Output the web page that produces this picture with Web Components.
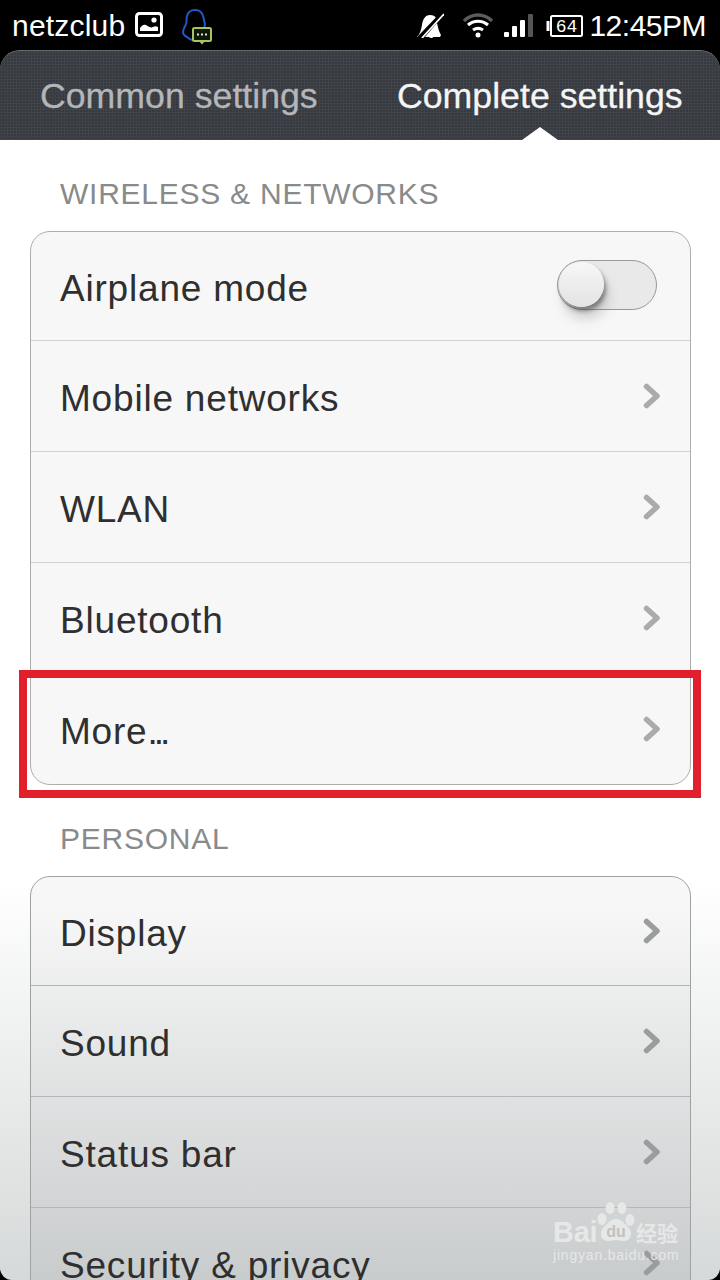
<!DOCTYPE html>
<html>
<head>
<meta charset="utf-8">
<title>Settings</title>
<style>
    html, body { margin: 0; padding: 0; background: #000; }
</style>
</head>
<body>
<settings-app></settings-app>
<script>
class StatusBar extends HTMLElement {
    constructor() {
        super();
        this.attachShadow({mode: "open"}).innerHTML = `
        <style>
            :host {
                display: flex;
                align-items: center;
                height: 50px;
                background: #000;
                color: #fff;
                font: 30px "Liberation Sans", Arial, sans-serif;
                padding: 2px 14px 0 12px;
                box-sizing: border-box;
            }
            .name { margin-right: 10px; letter-spacing: .2px; }
            svg { display: block; flex: none; }
            .photo { margin-top: -4px; }
            .qq { margin-left: 19px; margin-top: 1px; }
            .spacer { flex: 1; }
            .time { margin-left: 6px; letter-spacing: -.5px; }
        </style>
        <span class="name">netzclub</span>
        <svg class="photo" width="28" height="25" viewBox="0 0 28 25"><rect x="1.500" y="1.500" width="25" height="22" rx="3" fill="#000" stroke="#fff" stroke-width="3"/><circle cx="19" cy="8" r="2.600" fill="#fff"/><path d="M5 19v-3c2-3 4-4 6-3 3 2 5 3 7 2 2-1 3-1 5 0v4z" fill="#fff"/></svg>
        <svg class="qq" width="30" height="36" viewBox="0 0 30 36" fill="none"><path d="M22 18c1-1 1-2 1-3-1-3-1-5-2-8-1-4-4-6-8-6S6 3 5 7c-1 3 0 6-1 8-1 3-3 5-3 8 0 2 2 4 4 5 2 2 5 4 8 3" stroke="#2259c4" stroke-width="2"/><rect x="11" y="19" width="18" height="13" rx="1.500" fill="#10160a" stroke="#a4c65c" stroke-width="2"/><path d="M17 32l3 3.500 3-3.500z" fill="#a4c65c"/><path d="M15 25.500h2M19 25.500h2M23 25.500h2" stroke="#e2eec0" stroke-width="2.200"/></svg>
        <span class="spacer"></span>
        <svg style="margin-top:-3px" width="28" height="26" viewBox="0 0 28 26"><path d="M1 25c3-3 4-7 5-12C7 6 10 3 14 3c3 0 5 1 6 3L5 25z" fill="#fff"/><path d="M21 11c1 5 2 9 4 12l-1 2H17c0 1-1 1-2 1s-2-1-2-1H9z" fill="#fff"/><path d="M3 26L27 1" stroke="#000" stroke-width="4"/><path d="M6 26L28 2" stroke="#fff" stroke-width="1.800"/></svg>
        <svg style="margin-left:18px;margin-top:-2px" width="32" height="26" viewBox="0 0 32 26" fill="none"><path d="M2 9c8-8 20-8 28 0" stroke="#5c5c5c" stroke-width="3.500"/><path d="M6 13c6-5 14-5 20 0M11 18c3-2 7-2 10 0" stroke="#fff" stroke-width="3.200"/><circle cx="16" cy="23" r="2.500" fill="#fff"/></svg>
        <svg style="margin-left:10px" width="29" height="24" viewBox="0 0 29 24"><rect x="0" y="18" width="5" height="5" rx="1" fill="#fff"/><rect x="8" y="12" width="5" height="11" rx="1" fill="#fff"/><rect x="16" y="6" width="5" height="17" rx="1" fill="#fff"/><rect x="24" y="0" width="5" height="23" rx="1" fill="#555"/></svg>
        <svg style="margin-left:13px" width="37" height="22" viewBox="0 0 37 22" fill="none"><path d="M2 6v10" stroke="#fff" stroke-width="3"/><rect x="5" y="1" width="31" height="20" rx="1.500" stroke="#fff" stroke-width="2"/><text x="20.500" y="17" text-anchor="middle" font-family="Liberation Mono, monospace" font-size="18" fill="#fff">64</text></svg>
        <span class="time">12:45PM</span>
        `;
    }
}

class TabBar extends HTMLElement {
    constructor() {
        super();
        this.attachShadow({mode: "open"}).innerHTML = `
        <style>
            :host {
                display: flex;
                height: 90px;
                box-sizing: border-box;
                position: relative;
                border-radius: 20px 20px 0 0;
                border-top: 1px solid #6a6d70;
                background-color: #3b3e44;
                background-image: radial-gradient(circle at 1.500px 1.500px, #404349 0, #404349 1px, #36393e 1.400px);
                background-size: 3px 3px;
                font: 35.700px "Liberation Sans", Arial, sans-serif;
                -webkit-text-stroke: .3px currentColor;
            }
            .tab { position: absolute; top: 25px; white-space: nowrap; }
            .off { left: 40px; color: #b4b6b8; }
            .on { left: 397px; color: #f4f5f5; }
            .arrow {
                position: absolute;
                left: 522px;
                bottom: 0;
                width: 0;
                height: 0;
                border-left: 18px solid transparent;
                border-right: 18px solid transparent;
                border-bottom: 13px solid #fff;
            }
        </style>
        <span class="tab off">Common settings</span>
        <span class="tab on">Complete settings</span>
        <span class="arrow"></span>
        `;
    }
}

class ToggleSwitch extends HTMLElement {
    constructor() {
        super();
        this.attachShadow({mode: "open"}).innerHTML = `
        <style>
            :host {
                display: block;
                width: 100px;
                height: 50px;
                margin: 0 4px 2px 0;
                position: relative;
                box-sizing: border-box;
                border-radius: 25px;
                border: 1.500px solid #99979a;
                background: #e9e9e9;
            }
            .knob {
                position: absolute;
                left: 1px;
                top: 1px;
                width: 45px;
                height: 45px;
                border-radius: 50%;
                background: linear-gradient(#f7f7f7, #e3e3e3);
                box-shadow: 2px 4px 4px rgba(60,60,60,.55), 4px 12px 12px rgba(90,90,90,.25);
            }
        </style>
        <div class="knob"></div>
        `;
    }
}

class SettingsRow extends HTMLElement {
    constructor() {
        super();
        this.attachShadow({mode: "open"}).innerHTML = `
        <style>
            :host {
                display: flex;
                align-items: center;
                justify-content: space-between;
                height: 111px;
                box-sizing: border-box;
                padding: 0 29px 0 29px;
                border-top: 1px solid var(--line, #d2d2d2);
                color: #2f2f2f;
                font: 37px "Liberation Sans", Arial, sans-serif;
                letter-spacing: .8px;
            }
            :host(:first-child) { border-top: 0; height: 108px; }
            .label { padding-top: 5px; white-space: nowrap; }
            .dots { letter-spacing: -4px; }
            svg { display: block; }
        </style>
        <span class="label"></span>
        <slot><svg width="18" height="26" viewBox="0 0 18 26" fill="none"><path d="M3.500 3.500L14 13 3.500 22.500" stroke="var(--chev, #ababab)" stroke-width="5.500" stroke-linecap="round" stroke-linejoin="round"/></svg></slot>
        `;
    }
    connectedCallback() {
        let label = this.shadowRoot.querySelector(".label");
        let text = this.getAttribute("label");
        if (text.endsWith("...")) {
            label.textContent = text.slice(0, -3);
            let dots = document.createElement("span");
            dots.className = "dots";
            dots.textContent = "...";
            label.appendChild(dots);
        } else {
            label.textContent = text;
        }
    }
}

class SettingsGroup extends HTMLElement {
    constructor() {
        super();
        this.attachShadow({mode: "open"}).innerHTML = `
        <style>
            :host { display: block; }
            h2 {
                margin: 0;
                height: 56px;
                padding-left: 30px;
                font: 400 30px/37px "Liberation Sans", Arial, sans-serif;
                letter-spacing: .75px;
                color: #888a8b;
            }
            .card {
                border: 1px solid var(--edge, #adadad);
                border-radius: 20px;
                background: var(--card-bg, #f7f7f7);
                overflow: hidden;
            }
        </style>
        <h2></h2>
        <div class="card"><slot></slot></div>
        `;
    }
    connectedCallback() {
        this.shadowRoot.querySelector("h2").textContent = this.getAttribute("title");
    }
}

class RedFrame extends HTMLElement {
    constructor() {
        super();
        this.attachShadow({mode: "open"}).innerHTML = `
        <style>
            :host {
                display: block;
                position: absolute;
                left: 19px;
                top: 670px;
                width: 682px;
                height: 128px;
                box-sizing: border-box;
                border: 8px solid #e2202c;
            }
        </style>
        `;
    }
}

class BaiduMark extends HTMLElement {
    constructor() {
        super();
        this.attachShadow({mode: "open"}).innerHTML = `
        <style>
            :host {
                display: block;
                position: absolute;
                left: 552px;
                top: 1202px;
                width: 130px;
                height: 68px;
                color: #e6e8e8;
                font-family: "Liberation Sans", Arial, sans-serif;
            }
            span { position: absolute; white-space: nowrap; }
            .bai { left: 1px; top: 14px; font-size: 29px; font-weight: 700; letter-spacing: -.3px; }
            .cn { left: 84px; top: 17px; font: 700 21px/26px "Noto Sans CJK SC", sans-serif; }
            .url { left: 1px; top: 45px; font-size: 14px; letter-spacing: .8px; }
            svg { position: absolute; left: 44px; top: 0; }
        </style>
        <span class="bai">Bai</span>
        <svg width="40" height="44" viewBox="0 0 40 44"><g fill="#e6e8e8"><ellipse cx="6" cy="17" rx="4.500" ry="6"/><ellipse cx="14" cy="6" rx="4.500" ry="6"/><ellipse cx="26" cy="6" rx="4.500" ry="6"/><ellipse cx="34" cy="18" rx="4.500" ry="6"/><path d="M20 17c6 0 9 5 13 9 4 5 2 13-5 13-3 0-5-1-8-1s-5 1-8 1c-7 0-9-7-5-13 4-4 7-9 13-9z"/></g><text x="20" y="35" text-anchor="middle" font-family="Liberation Sans, sans-serif" font-size="16" font-weight="700" fill="#bfc2c3">du</text></svg>
        <span class="cn">经验</span>
        <span class="url">jingyan.baidu.com</span>
        `;
    }
}

class SettingsApp extends HTMLElement {
    constructor() {
        super();
        this.attachShadow({mode: "open"}).innerHTML = `
        <style>
            :host {
                display: block;
                position: relative;
                width: 720px;
                height: 1280px;
                overflow: hidden;
                background: #000;
            }
            .page {
                height: 1140px;
                box-sizing: border-box;
                padding: 35px 29px 0 30px;
                border-radius: 0 0 12px 12px;
                background: linear-gradient(#fff 0, #fff 740px, #d6d9d9 1140px);
                overflow: hidden;
            }
            settings-group + settings-group { margin-top: 35px; }
            .second {
                --card-bg: linear-gradient(#f7f7f7 0, #f7f7f7 30px, #c9cccd 400px);
                --edge: #9fa2a3;
                --line: #b4b7b8;
                --chev: #9a9c9d;
            }
        </style>
        <status-bar></status-bar>
        <tab-bar></tab-bar>
        <div class="page">
            <settings-group title="WIRELESS &amp; NETWORKS">
                <settings-row label="Airplane mode"><toggle-switch></toggle-switch></settings-row>
                <settings-row label="Mobile networks"></settings-row>
                <settings-row label="WLAN"></settings-row>
                <settings-row label="Bluetooth"></settings-row>
                <settings-row label="More..."></settings-row>
            </settings-group>
            <settings-group class="second" title="PERSONAL">
                <settings-row label="Display"></settings-row>
                <settings-row label="Sound"></settings-row>
                <settings-row label="Status bar"></settings-row>
                <settings-row label="Security &amp; privacy"></settings-row>
            </settings-group>
        </div>
        <red-frame></red-frame>
        <baidu-mark></baidu-mark>
        `;
    }
}

customElements.define("status-bar", StatusBar);
customElements.define("tab-bar", TabBar);
customElements.define("toggle-switch", ToggleSwitch);
customElements.define("settings-row", SettingsRow);
customElements.define("settings-group", SettingsGroup);
customElements.define("red-frame", RedFrame);
customElements.define("baidu-mark", BaiduMark);
customElements.define("settings-app", SettingsApp);
</script>
</body>
</html>
